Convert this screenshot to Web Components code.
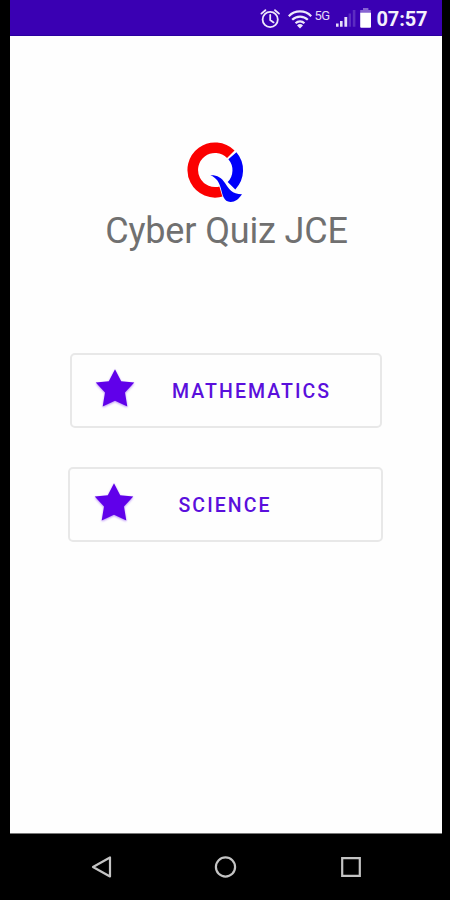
<!DOCTYPE html>
<html lang="en">
<head>
<meta charset="utf-8">
<meta name="viewport" content="width=device-width, initial-scale=1">
<title>Cyber Quiz JCE</title>
<style>
  html, body{ margin:0; height:100%; background:#000; }
  body{ font-family:Roboto, "Liberation Sans", sans-serif; overflow:hidden; }
</style>
</head>
<body>
<quiz-phone>
  <quiz-statusbar slot="status" time="07:57" network="5G"></quiz-statusbar>
  <quiz-brand><quiz-logo slot="logo"></quiz-logo>Cyber Quiz JCE</quiz-brand>
  <quiz-option style="--w:312px; --h:75px; --gap:37.5px; --top:101px; --star:23px">MATHEMATICS</quiz-option>
  <quiz-option style="--w:315px; --h:75px; --gap:45px; --top:39px; --star:23.5px">SCIENCE</quiz-option>
  <quiz-navbar slot="nav"></quiz-navbar>
</quiz-phone>

<script>
(function(){
  function define(name, html){
    customElements.define(name, class extends HTMLElement{
      connectedCallback(){
        if(this.shadowRoot) return;
        this.attachShadow({mode:'open'}).innerHTML = html(this);
      }
    });
  }

  /* ---- phone frame: status bar, white screen, navigation bar ---- */
  define('quiz-phone', function(){ return `
    <style>
      :host{ display:flex; flex-direction:column; box-sizing:border-box; height:900px; width:450px;
        padding:0 8.5px 0 9.5px; background:#000; }
      main{ flex:1; display:flex; flex-direction:column; align-items:center; background:#fefefe; min-height:0; }
    </style>
    <slot name="status"></slot>
    <main><slot></slot></main>
    <slot name="nav"></slot>`; });

  /* ---- Android status bar ---- */
  define('quiz-statusbar', function(el){ return `
    <style>
      :host{ display:flex; justify-content:flex-end; height:36px; box-sizing:border-box; padding:0 14px 0 0;
        background:#3a00b3; border-bottom:1px solid #2a00a0; color:#f4f0fc; }
      svg{ display:block; flex:none; }
      .net{ font-size:13px; line-height:14px; letter-spacing:-.6px; padding:9px 0 0 1px; width:17px; color:#e2d9f6; }
      .time{ font-size:20px; font-weight:700; line-height:24px; padding-top:7px; margin-left:2px; letter-spacing:-.1px; }
    </style>
    <svg width="54" height="35" viewBox="259 0 54 35" fill="none" stroke="#eee8fb" stroke-width="1.8" stroke-linecap="round">
      <circle cx="270.2" cy="19.5" r="7.6"/>
      <path d="M270.2 15v5l3.4 2.4M261.4 13.6l4-3.4M279 13.6l-4-3.4"/>
      <path stroke-width="2.2" stroke-linecap="butt" d="M288.8 16.2a15.6 15.6 0 0 1 22.4 0M292.2 19.8a11 11 0 0 1 15.6 0M295.6 23.2a6.2 6.2 0 0 1 8.8 0"/>
      <path fill="#eee8fb" stroke="none" d="M297 25.4a4.4 4.4 0 0 1 6 0L300 28.4z"/>
    </svg>
    <span class="net">${el.getAttribute('network')}</span>
    <svg width="43" height="35" viewBox="331 0 43 35">
      <g fill="#e6def8">
        <path d="M336 23.6h2.6v3.2H336zM340 21h2.6v5.8H340zM344.4 17h2.8v9.8h-2.8z"/>
        <path opacity=".2" d="M348.6 13.4h2.4v13.4h-2.4zM352.8 10h2.6v16.8h-2.6z"/>
        <path opacity=".45" d="M363 8h5.4v2h2.4v3.2h-10.6V10h2.8z"/>
      </g>
      <path fill="#fff" d="M360.2 12.8h10.8v14q0 1-1 1h-8.8q-1 0-1-1z"/>
    </svg>
    <span class="time">${el.getAttribute('time')}</span>`; });

  /* ---- Q mark: red and blue ring with a curved tail ---- */
  define('quiz-logo', function(){ return `
    <style>:host{ display:block; width:60px; height:64px; } svg{ display:block; }</style>
    <svg width="60" height="64" viewBox="186 140 60 64" aria-hidden="true">
      <g fill="none" stroke-width="10.6">
        <path stroke="#fb0000" d="M230.8 154.2A22.3 22.3 0 1 0 222 191.2"/>
        <path stroke="#0000fa" d="M232.4 155.7A22.3 22.3 0 0 1 231.5 185.7"/>
      </g>
      <path fill="#0000fa" stroke="#fefefe" stroke-width="1.6" paint-order="stroke"
        d="M210.300 175.300C217 175 221.500 177.600 225 183C228.500 188.500 232 194.200 242 194.300C238.500 199.500 235 202 230.500 201.900C223.500 201.700 222.600 195 221 189C219.500 183 217 178 210.300 175.300z"/>
    </svg>`; });

  define('quiz-brand', function(){ return `
    <style>
      :host{ display:flex; flex-direction:column; align-items:center; padding-top:104px; color:#707070; }
      .name{ font-size:36px; line-height:42px; margin-top:6px; white-space:nowrap; letter-spacing:-.15px; padding-left:2px; }
      ::slotted(quiz-logo){ margin-right:20px; }
    </style>
    <slot name="logo"></slot>
    <div class="name"><slot></slot></div>`; });

  /* ---- outlined subject button ---- */
  define('quiz-option', function(){ return `
    <style>
      :host{ display:block; margin-top:var(--top); }
      button{ display:flex; align-items:center; gap:var(--gap); box-sizing:border-box; width:var(--w); height:var(--h);
        padding:0 0 0 var(--star); border:2px solid #e8e8e8; border-radius:5px; background:transparent;
        font:500 19.5px/24px Roboto, "Liberation Sans", sans-serif; letter-spacing:2.05px; color:#5a0fdc; }
      svg{ display:block; flex:none; margin-top:-4px; overflow:visible; filter:drop-shadow(0 1.5px 1px rgba(98,0,238,.45)); }
      span{ padding-top:2px; }
    </style>
    <button type="button">
      <svg width="40" height="39" viewBox="0 0 40 39" fill="#6000ea" aria-hidden="true">
        <path d="M20 .3l6.200 12 13.100 1.300-9.300 9.900 2.300 14L20 31.800 7.700 37.500 10 23.500.7 13.600 13.800 12.300z"/>
      </svg>
      <span><slot></slot></span>
    </button>`; });

  /* ---- back / home / recents ---- */
  define('quiz-navbar', function(){ return `
    <style>
      :host{ display:flex; justify-content:space-between; align-items:center; box-sizing:border-box; height:67px;
        padding:0 78.5px 0 79.5px; background:#000; border-top:1px solid #777; }
      svg{ display:block; fill:none; stroke:#c4c4c4; stroke-width:2.2; stroke-linejoin:round; }
    </style>
    <svg width="24" height="24" viewBox="0 0 24 24"><path d="M4 12L21 2.500v19z"/></svg>
    <svg width="24" height="24" viewBox="0 0 24 24"><circle cx="11.500" cy="12" r="9.600"/></svg>
    <svg width="24" height="24" viewBox="0 0 24 24"><path stroke-linejoin="miter" d="M3.200 3.200h17.600v17.600H3.200z"/></svg>`; });
})();
</script>
</body>
</html>
